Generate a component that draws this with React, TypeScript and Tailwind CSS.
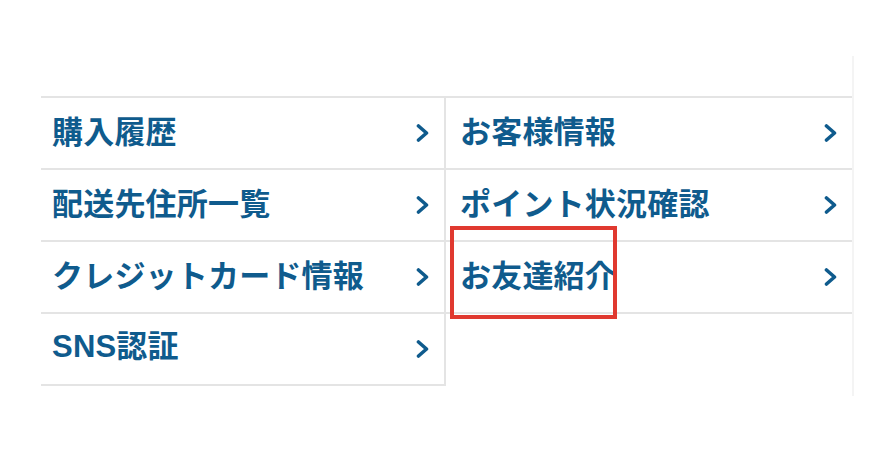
import React from "react";

const Chevron = () => (
  <svg width="14" height="20" viewBox="0 0 14 20" className="shrink-0">
    <polyline points="2.5,3 10.5,10 2.5,17" fill="none" stroke="#0f5b8d" strokeWidth="3.6" strokeLinecap="round" strokeLinejoin="round" />
  </svg>
);

const Row = ({ label, pl, children }: { label: React.ReactNode; pl: string; children?: React.ReactNode }) => (
  <div className={`relative h-[72px] border-t-2 border-[#e4e4e4] flex items-center justify-between pr-[14px] ${pl}`}>
    <span className="text-[31px] leading-none font-bold text-[#0f5b8d] pb-[8px] tracking-[0.2px]">{label}</span>
    <Chevron />
    {children}
  </div>
);

export default function App() {
  return (
    <div
      className="w-[895px] h-[466px] bg-white overflow-hidden"
      style={{ fontFamily: '"Noto Sans CJK JP", "Noto Sans", sans-serif' }}
    >
      <div className="ml-[41px] mt-[56px] w-[813px] h-[340px] border-r-2 border-[#f4f4f4] pt-[40px]">
        <div className="flex items-start">
          <div className="w-[405px] border-r-2 border-b-2 border-[#e4e4e4]">
            <Row label="購入履歴" pl="pl-[11px]" />
            <Row label="配送先住所一覧" pl="pl-[11px]" />
            <Row label="クレジットカード情報" pl="pl-[11px]" />
            <Row
              label={
                <>
                  <span className="font-['Liberation_Sans',sans-serif]">SNS</span>認証
                </>
              }
              pl="pl-[11px]"
            />
          </div>
          <div className="w-[406px] border-b-2 border-[#e4e4e4]">
            <Row label="お客様情報" pl="pl-[14px]" />
            <Row label="ポイント状況確認" pl="pl-[14px]" />
            <Row label="お友達紹介" pl="pl-[14px]">
              <div className="absolute left-[4px] top-[-16px] w-[167px] h-[93px] border-4 border-[#e0392f] pointer-events-none" />
            </Row>
          </div>
        </div>
      </div>
    </div>
  );
}
